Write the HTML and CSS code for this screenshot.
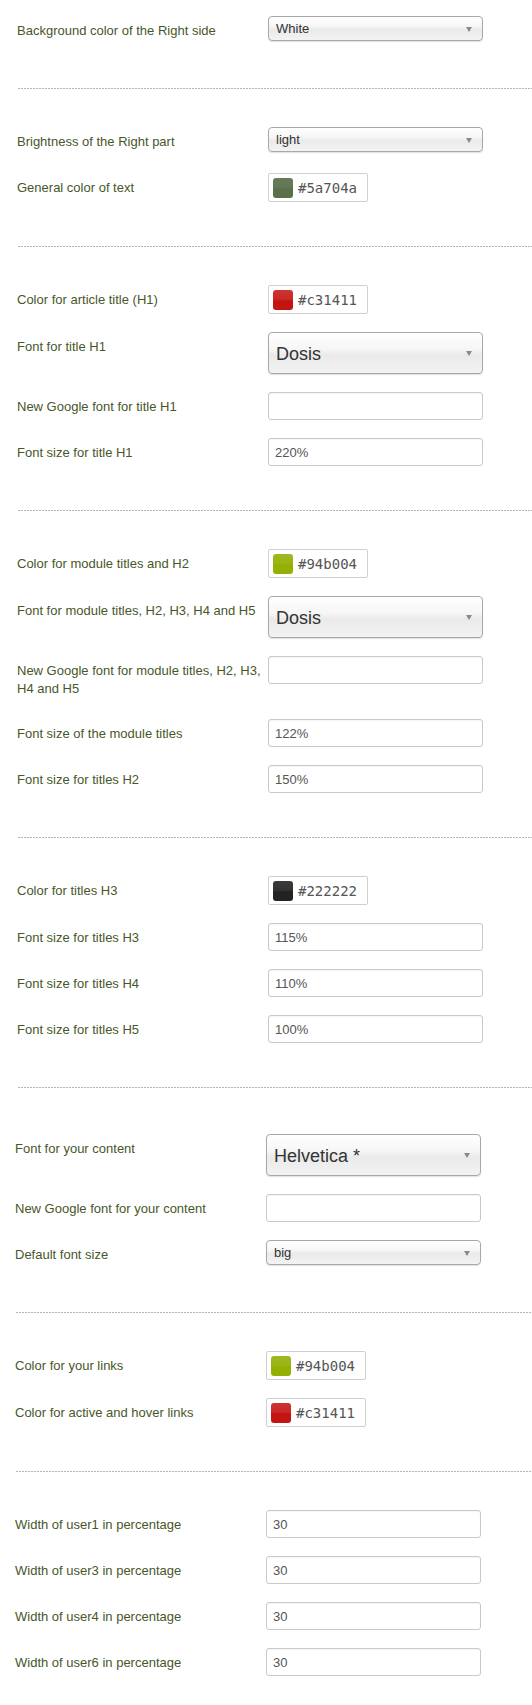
FILE: index.html
```html
<!DOCTYPE html>
<html lang="en">
<head>
<meta charset="utf-8">
<title>Template settings</title>
<link rel="stylesheet" href="styles.css">
</head>
<body>
<div class="page">

  <div class="group">
    <div class="row">
      <label class="lbl">Background color of the Right side</label>
      <div class="select"><span class="val">White</span><span class="arrow"></span></div>
    </div>
  </div>

  <hr class="sep">

  <div class="group">
    <div class="row">
      <label class="lbl">Brightness of the Right part</label>
      <div class="select"><span class="val">light</span><span class="arrow"></span></div>
    </div>
    <div class="row">
      <label class="lbl">General color of text</label>
      <div class="color"><span class="swatch sw-olive"></span><span class="hex">#5a704a</span></div>
    </div>
  </div>

  <hr class="sep">

  <div class="group">
    <div class="row">
      <label class="lbl">Color for article title (H1)</label>
      <div class="color"><span class="swatch sw-red"></span><span class="hex">#c31411</span></div>
    </div>
    <div class="row">
      <label class="lbl">Font for title H1</label>
      <div class="select big"><span class="val">Dosis</span><span class="arrow"></span></div>
    </div>
    <div class="row">
      <label class="lbl">New Google font for title H1</label>
      <input class="txt" type="text" value="">
    </div>
    <div class="row">
      <label class="lbl">Font size for title H1</label>
      <input class="txt" type="text" value="220%">
    </div>
  </div>

  <hr class="sep">

  <div class="group">
    <div class="row">
      <label class="lbl">Color for module titles and H2</label>
      <div class="color"><span class="swatch sw-green"></span><span class="hex">#94b004</span></div>
    </div>
    <div class="row">
      <label class="lbl">Font for module titles, H2, H3, H4 and H5</label>
      <div class="select big"><span class="val">Dosis</span><span class="arrow"></span></div>
    </div>
    <div class="row">
      <label class="lbl">New Google font for module titles, H2, H3, H4 and H5</label>
      <input class="txt" type="text" value="">
    </div>
    <div class="row">
      <label class="lbl">Font size of the module titles</label>
      <input class="txt" type="text" value="122%">
    </div>
    <div class="row">
      <label class="lbl">Font size for titles H2</label>
      <input class="txt" type="text" value="150%">
    </div>
  </div>

  <hr class="sep">

  <div class="group">
    <div class="row">
      <label class="lbl">Color for titles H3</label>
      <div class="color"><span class="swatch sw-dark"></span><span class="hex">#222222</span></div>
    </div>
    <div class="row">
      <label class="lbl">Font size for titles H3</label>
      <input class="txt" type="text" value="115%">
    </div>
    <div class="row">
      <label class="lbl">Font size for titles H4</label>
      <input class="txt" type="text" value="110%">
    </div>
    <div class="row">
      <label class="lbl">Font size for titles H5</label>
      <input class="txt" type="text" value="100%">
    </div>
  </div>

  <hr class="sep">

  <div class="shifted">
    <div class="group extra-top">
      <div class="row">
        <label class="lbl">Font for your content</label>
        <div class="select big"><span class="val">Helvetica *</span><span class="arrow"></span></div>
      </div>
      <div class="row">
        <label class="lbl">New Google font for your content</label>
        <input class="txt" type="text" value="">
      </div>
      <div class="row">
        <label class="lbl">Default font size</label>
        <div class="select"><span class="val">big</span><span class="arrow"></span></div>
      </div>
    </div>

    <hr class="sep">

    <div class="group">
      <div class="row">
        <label class="lbl">Color for your links</label>
        <div class="color"><span class="swatch sw-green"></span><span class="hex">#94b004</span></div>
      </div>
      <div class="row">
        <label class="lbl">Color for active and hover links</label>
        <div class="color"><span class="swatch sw-red"></span><span class="hex">#c31411</span></div>
      </div>
    </div>

    <hr class="sep">

    <div class="group">
      <div class="row">
        <label class="lbl">Width of user1 in percentage</label>
        <input class="txt" type="text" value="30">
      </div>
      <div class="row">
        <label class="lbl">Width of user3 in percentage</label>
        <input class="txt" type="text" value="30">
      </div>
      <div class="row">
        <label class="lbl">Width of user4 in percentage</label>
        <input class="txt" type="text" value="30">
      </div>
      <div class="row">
        <label class="lbl">Width of user6 in percentage</label>
        <input class="txt" type="text" value="30">
      </div>
    </div>
  </div>

</div>
</body>
</html>
```

FILE: styles.css
```css
html, body {
  margin: 0;
  padding: 0;
  background: #ffffff;
}

body {
  font-family: "Liberation Sans", Arial, Helvetica, sans-serif;
  font-size: 13px;
  color: #4b5a2c;
}

.page {
  padding: 16px 0 20px 17px;
}

.shifted {
  margin-left: -2px;
}

.group.extra-top {
  padding-top: 8px;
}

.row {
  display: flex;
  align-items: flex-start;
  min-height: 28px;
  margin-bottom: 18px;
}

.lbl {
  flex: 0 0 251px;
  width: 251px;
  box-sizing: border-box;
  padding: 6px 0 3px 0;
  line-height: 18px;
  font-size: 13px;
  color: #48572a;
}

/* the last row's 18px bottom margin collapses into this 44px top margin */
.sep {
  border: 0;
  height: 1px;
  margin: 44px 0 38px 1px;
  background: repeating-linear-gradient(to right, #b4b4b4 0 2px, transparent 2px 3px);
}

/* select boxes */
.select {
  position: relative;
  box-sizing: border-box;
  width: 215px;
  height: 25px;
  display: flex;
  align-items: center;
  padding: 0 24px 0 7px;
  border: 1px solid #a8a8a8;
  border-radius: 4px;
  background: linear-gradient(to bottom, #ffffff 0%, #f6f6f6 40%, #eaeaea 55%, #f3f3f3 100%);
  box-shadow: 0 1px 1px rgba(0, 0, 0, 0.12);
  color: #333333;
  font-size: 13px;
}

.select.big {
  height: 42px;
  font-size: 18px;
  padding-left: 7px;
  padding-top: 2px;
}

.select .val {
  flex: 1;
  white-space: nowrap;
}

.select .arrow {
  position: absolute;
  right: 10px;
  top: 50%;
  margin-top: -2px;
  width: 0;
  height: 0;
  border-left: 3px solid transparent;
  border-right: 3px solid transparent;
  border-top: 5px solid #8a8a8a;
}

/* colour pickers */
.color {
  box-sizing: border-box;
  width: 100px;
  height: 29px;
  display: flex;
  align-items: center;
  gap: 5px;
  padding: 0 4px;
  border: 1px solid #cfcfcf;
  border-radius: 2px;
  background: #ffffff;
}

.swatch {
  flex: 0 0 20px;
  width: 20px;
  height: 20px;
  border-radius: 3px;
}

.sw-olive {
  background: linear-gradient(to bottom, #677b58 0%, #637755 45%, transparent 55%), #5a704a;
}

.sw-red {
  background: linear-gradient(to bottom, #cc3531 0%, #c82a26 45%, transparent 55%), #c31411;
}

.sw-green {
  background: linear-gradient(to bottom, #9eb820 0%, #9ab515 45%, transparent 55%), #94b004;
}

.sw-dark {
  background: linear-gradient(to bottom, #3a3a3a 0%, #333333 45%, transparent 55%), #222222;
}

.hex {
  font-family: "DejaVu Sans Mono", "Liberation Mono", monospace;
  font-size: 14px;
  color: #555555;
}

/* text inputs */
.txt {
  box-sizing: border-box;
  width: 215px;
  height: 28px;
  margin: 0;
  padding: 0 6px;
  border: 1px solid #c9c9c9;
  border-radius: 3px;
  background: #ffffff;
  box-shadow: inset 0 1px 1px rgba(0, 0, 0, 0.04);
  font-family: "Liberation Sans", Arial, Helvetica, sans-serif;
  font-size: 13px;
  color: #555555;
  outline: none;
}
```
